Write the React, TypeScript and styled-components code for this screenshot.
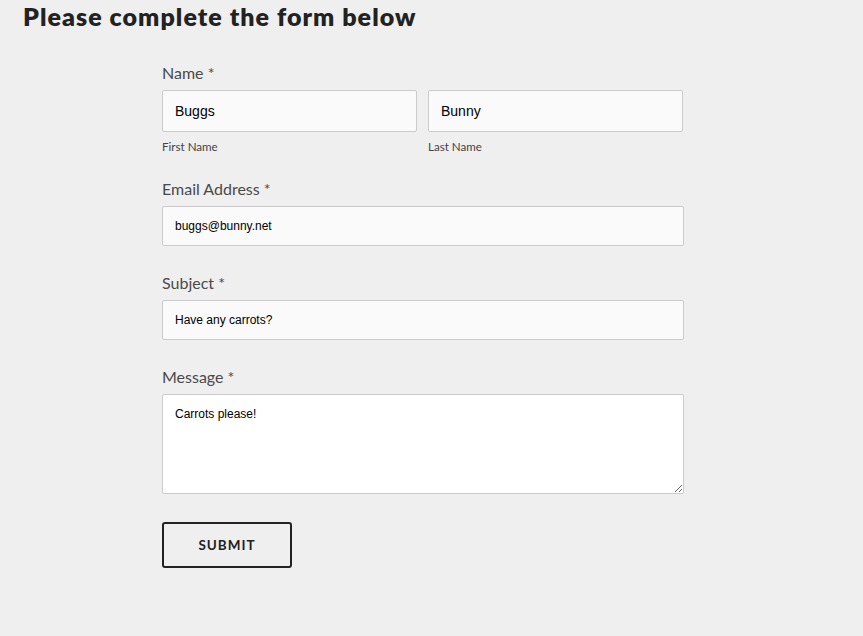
import React from "react";
import styled, { createGlobalStyle } from "styled-components";

const GlobalStyle = createGlobalStyle`
  html, body {
    margin: 0;
    padding: 0;
    background: #efefef;
  }
  body {
    font-family: "Lato", "Liberation Sans", sans-serif;
  }
`;

const Page = styled.div`
  padding: 1px 0 0 23px;
  min-height: 636px;
  box-sizing: border-box;
`;

const Title = styled.h1`
  margin: 0;
  font-family: "Lato", sans-serif;
  font-weight: 800;
  font-size: 25px;
  line-height: 30px;
  color: #222;
  letter-spacing: 1.05px;
`;

const Form = styled.form`
  width: 522px;
  margin: 33px 0 0 139px;
  display: flex;
  flex-direction: column;
`;

const Group = styled.div<{ $tight?: boolean }>`
  display: flex;
  flex-direction: column;
  margin-bottom: ${(p) => (p.$tight ? "26px" : "28px")};
`;

const Label = styled.label`
  font-family: "Lato", sans-serif;
  font-size: 16px;
  line-height: 18px;
  color: #4a4a4a;
  margin-bottom: 8px;
`;

const Row = styled.div`
  display: grid;
  grid-template-columns: 255px 255px;
  column-gap: 11px;
`;

const Sub = styled.div`
  display: flex;
  flex-direction: column;
`;

const SubLabel = styled.span`
  font-family: "Lato", sans-serif;
  font-size: 11.6px;
  line-height: 14px;
  color: #444;
  margin-top: 8px;
`;

const Input = styled.input<{ $big?: boolean }>`
  box-sizing: border-box;
  width: 100%;
  height: ${(p) => (p.$big ? "42px" : "40px")};
  border: 1px solid #cbcbcb;
  border-radius: 2px;
  background: #fafafa;
  padding: 0 12px;
  font-family: "Liberation Sans", Arial, sans-serif;
  font-size: ${(p) => (p.$big ? "14px" : "12px")};
  color: #000;
  outline: none;
`;

const TextArea = styled.textarea`
  box-sizing: border-box;
  width: 100%;
  height: 100px;
  border: 1px solid #cbcbcb;
  border-radius: 2px;
  background: #fff;
  padding: 12px;
  font-family: "Liberation Sans", Arial, sans-serif;
  font-size: 12px;
  color: #000;
  caret-color: #000;
  outline: none;
  resize: both;
  display: block;
`;

const Submit = styled.button`
  width: 130px;
  height: 46px;
  border: 2px solid #222;
  border-radius: 3px;
  background: transparent;
  font-family: "Lato", sans-serif;
  font-weight: 700;
  font-size: 13.5px;
  letter-spacing: 1px;
  color: #222;
  cursor: pointer;
`;

export default function App() {
  return (
    <>
      <GlobalStyle />
      <Page>
        <Title>Please complete the form below</Title>
        <Form onSubmit={(e) => e.preventDefault()}>
          <Group $tight>
            <Label>Name *</Label>
            <Row>
              <Sub>
                <Input $big defaultValue="Buggs" />
                <SubLabel>First Name</SubLabel>
              </Sub>
              <Sub>
                <Input $big defaultValue="Bunny" />
                <SubLabel>Last Name</SubLabel>
              </Sub>
            </Row>
          </Group>
          <Group>
            <Label>Email Address *</Label>
            <Input defaultValue="buggs@bunny.net" />
          </Group>
          <Group>
            <Label>Subject *</Label>
            <Input defaultValue="Have any carrots?" />
          </Group>
          <Group>
            <Label>Message *</Label>
            <TextArea
              autoFocus
              defaultValue="Carrots please!"
              onFocus={(e) => {
                const len = e.currentTarget.value.length;
                e.currentTarget.setSelectionRange(len, len);
              }}
            />
          </Group>
          <div>
            <Submit type="submit">SUBMIT</Submit>
          </div>
        </Form>
      </Page>
    </>
  );
}
